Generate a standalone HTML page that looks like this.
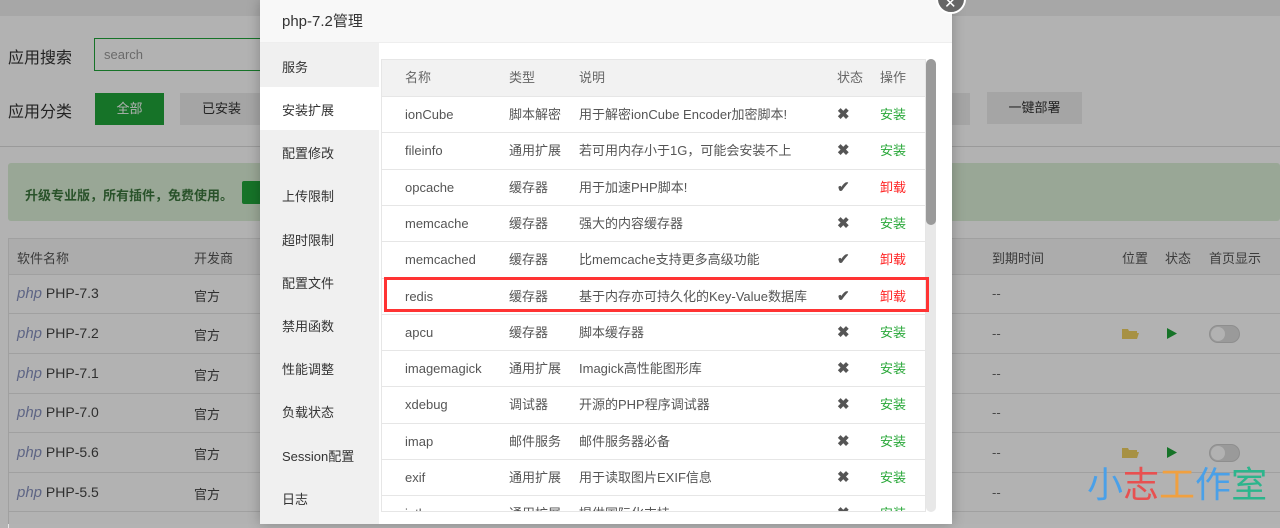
<!DOCTYPE html>
<html style="background:#b3b3b3"><head><meta charset="utf-8"><style>
*{margin:0;padding:0;box-sizing:border-box}
body{width:1280px;height:524px;overflow:hidden;background:#b3b3b3;font-family:"Liberation Sans","Noto Sans CJK SC",sans-serif;position:relative;color:#333}
.a{position:absolute;white-space:nowrap}
.t13{font-size:13px}
#shade{position:absolute;left:0;top:0;width:1280px;height:524px;background:rgba(0,0,0,0.3);z-index:5}
#modal{position:absolute;left:0;top:0;width:1280px;height:524px;z-index:10}
</style></head><body>
<div class="a" style="left:0;top:0;width:1280px;height:524px;background:#fff"></div>
<div class="a" style="left:0;top:0;width:1280px;height:16px;background:#f0f0f0"></div>
<div class="a" style="left:8px;top:44px;font-size:16px;color:#333">应用搜索</div>
<div class="a" style="left:94px;top:38px;width:180px;height:33px;border:1px solid #20a53a;background:#fff"></div>
<div class="a" style="left:104px;top:47px;font-size:13px;color:#999">search</div>
<div class="a" style="left:8px;top:98px;font-size:16px;color:#333">应用分类</div>
<div class="a" style="left:95px;top:93px;width:69px;height:32px;background:#20a53a;color:#fff;font-size:13px;text-align:center;line-height:32px">全部</div>
<div class="a" style="left:180px;top:93px;width:90px;height:32px;background:#ececec;color:#333;font-size:13px;line-height:32px;padding-left:22px">已安装</div>
<div class="a" style="left:950px;top:93px;width:20px;height:32px;background:#ececec"></div>
<div class="a" style="left:987px;top:92px;width:95px;height:32px;background:#ececec;color:#333;font-size:13px;line-height:32px;text-align:center">一键部署</div>
<div class="a" style="left:0;top:146px;width:1280px;height:1px;background:#ddd"></div>
<div class="a" style="left:8px;top:163px;width:1272px;height:58px;background:#dcf0d7;border-radius:3px"></div>
<div class="a" style="left:25px;top:185px;font-size:13px;color:#3c763d;font-weight:bold">升级专业版，所有插件，免费使用。</div>
<div class="a" style="left:242px;top:181px;width:30px;height:23px;background:#20a53a;border-radius:2px"></div>
<div class="a" style="left:8px;top:238px;width:1272px;height:37px;background:#f6f6f6;border-top:1px solid #e6e6e6;border-bottom:1px solid #e6e6e6"></div>
<div class="a t13" style="left:17px;top:248px;color:#555">软件名称</div>
<div class="a t13" style="left:194px;top:248px;color:#555">开发商</div>
<div class="a t13" style="left:992px;top:248px;color:#555">到期时间</div>
<div class="a t13" style="left:1122px;top:248px;color:#555">位置</div>
<div class="a t13" style="left:1165px;top:248px;color:#555">状态</div>
<div class="a t13" style="left:1209px;top:248px;color:#555">首页显示</div>
<div class="a" style="left:8px;top:238px;width:1px;height:290px;background:#e6e6e6"></div>
<div class="a" style="left:8px;top:313px;width:1272px;height:1px;background:#e6e6e6"></div>
<div class="a" style="left:8px;top:353px;width:1272px;height:1px;background:#e6e6e6"></div>
<div class="a" style="left:8px;top:393px;width:1272px;height:1px;background:#e6e6e6"></div>
<div class="a" style="left:8px;top:432px;width:1272px;height:1px;background:#e6e6e6"></div>
<div class="a" style="left:8px;top:472px;width:1272px;height:1px;background:#e6e6e6"></div>
<div class="a" style="left:8px;top:511px;width:1272px;height:1px;background:#e6e6e6"></div>
<div class="a" style="left:17px;top:285px;color:#444;font-size:14px"><i style="color:#8892bf;font-size:15px">php</i> PHP-7.3</div>
<div class="a" style="left:17px;top:325px;color:#444;font-size:14px"><i style="color:#8892bf;font-size:15px">php</i> PHP-7.2</div>
<div class="a" style="left:17px;top:365px;color:#444;font-size:14px"><i style="color:#8892bf;font-size:15px">php</i> PHP-7.1</div>
<div class="a" style="left:17px;top:404px;color:#444;font-size:14px"><i style="color:#8892bf;font-size:15px">php</i> PHP-7.0</div>
<div class="a" style="left:17px;top:444px;color:#444;font-size:14px"><i style="color:#8892bf;font-size:15px">php</i> PHP-5.6</div>
<div class="a" style="left:17px;top:484px;color:#444;font-size:14px"><i style="color:#8892bf;font-size:15px">php</i> PHP-5.5</div>
<div class="a t13" style="left:194px;top:286px;color:#444">官方</div>
<div class="a t13" style="left:194px;top:325px;color:#444">官方</div>
<div class="a t13" style="left:194px;top:365px;color:#444">官方</div>
<div class="a t13" style="left:194px;top:404px;color:#444">官方</div>
<div class="a t13" style="left:194px;top:444px;color:#444">官方</div>
<div class="a t13" style="left:194px;top:484px;color:#444">官方</div>
<div class="a t13" style="left:992px;top:286px;color:#666">--</div>
<div class="a t13" style="left:992px;top:326px;color:#666">--</div>
<div class="a t13" style="left:992px;top:366px;color:#666">--</div>
<div class="a t13" style="left:992px;top:405px;color:#666">--</div>
<div class="a t13" style="left:992px;top:445px;color:#666">--</div>
<div class="a t13" style="left:992px;top:485px;color:#666">--</div>
<svg class="a" style="left:1122px;top:327px" width="17" height="12"><path d="M0 2h6l1 2h8v2H3L0 12zM3 6h14l-2 6H0z" fill="#f0d060"/></svg>
<svg class="a" style="left:1122px;top:446px" width="17" height="12"><path d="M0 2h6l1 2h8v2H3L0 12zM3 6h14l-2 6H0z" fill="#f0d060"/></svg>
<svg class="a" style="left:1167px;top:328px" width="10" height="11"><path d="M0 0L10 5.5 0 11z" fill="#20a53a"/></svg>
<svg class="a" style="left:1167px;top:447px" width="10" height="11"><path d="M0 0L10 5.5 0 11z" fill="#20a53a"/></svg>
<div class="a" style="left:1209px;top:325px;width:31px;height:18px;border-radius:9px;background:#ddd;border:1px solid #ccc"><div style="position:absolute;left:1px;top:1px;width:14px;height:14px;border-radius:50%;background:#fff"></div></div>
<div class="a" style="left:1209px;top:444px;width:31px;height:18px;border-radius:9px;background:#ddd;border:1px solid #ccc"><div style="position:absolute;left:1px;top:1px;width:14px;height:14px;border-radius:50%;background:#fff"></div></div>

<div id="shade"></div>

<div id="modal">
<div class="a" style="left:260px;top:0;width:692px;height:524px;background:#fff;box-shadow:0 0 12px rgba(0,0,0,.25)"></div>
<div class="a" style="left:260px;top:0;width:692px;height:43px;background:#f8f8f8;border-bottom:1px solid #eee"></div>
<div class="a" style="left:282px;top:10px;font-size:15px;color:#333">php-7.2管理</div>
<div class="a" style="left:260px;top:43px;width:119px;height:481px;background:#f0f0f0"></div>
<div class="a" style="left:260px;top:87px;width:119px;height:43px;background:#fff"></div>
<div class="a t13" style="left:282px;top:57px">服务</div>
<div class="a t13" style="left:282px;top:100px">安装扩展</div>
<div class="a t13" style="left:282px;top:143px">配置修改</div>
<div class="a t13" style="left:282px;top:186px">上传限制</div>
<div class="a t13" style="left:282px;top:230px">超时限制</div>
<div class="a t13" style="left:282px;top:273px">配置文件</div>
<div class="a t13" style="left:282px;top:316px">禁用函数</div>
<div class="a t13" style="left:282px;top:359px">性能调整</div>
<div class="a t13" style="left:282px;top:402px">负载状态</div>
<div class="a t13" style="left:282px;top:446px">Session配置</div>
<div class="a t13" style="left:282px;top:489px">日志</div>
<div class="a" style="left:936px;top:-16px;width:30px;height:30px;border-radius:50%;background:#666;border:2px solid #fff"></div>
<div class="a" style="left:944px;top:-6px;color:#fff;font-size:15px">✕</div>
<div class="a" style="left:381px;top:59px;width:545px;height:453px;overflow:hidden;border:1px solid #e6e6e6">
<div style="position:absolute;left:0;top:0;width:545px;height:36px;background:#f2f2f2;font-size:13px;color:#666;line-height:36px">
<span style="position:absolute;left:23px">名称</span><span style="position:absolute;left:127px">类型</span><span style="position:absolute;left:197px">说明</span><span style="position:absolute;left:455px">状态</span><span style="position:absolute;left:498px">操作</span></div>
<div id="rows"></div>
</div>
<div class="a" style="left:926px;top:59px;width:10px;height:453px;background:#e8e8e8;border-radius:5px"></div>
<div class="a" style="left:926px;top:59px;width:10px;height:166px;background:#9a9a9a;border-radius:5px"></div>
<div class="a" style="left:384px;top:277px;width:545px;height:35px;border:3px solid #f33"></div>
<div class="a" style="left:1087px;top:462px;font-size:36px;line-height:40px;font-family:'Noto Sans CJK SC',sans-serif"><span style="color:#4aa0e8">小</span><span style="color:#e85050">志</span><span style="color:#f0a040">工</span><span style="color:#4aa0e8">作</span><span style="color:#2cb58c">室</span></div>
</div>

<script>
var d=[["ionCube","脚本解密","用于解密ionCube Encoder加密脚本!",0],["fileinfo","通用扩展","若可用内存小于1G，可能会安装不上",0],["opcache","缓存器","用于加速PHP脚本!",1],["memcache","缓存器","强大的内容缓存器",0],["memcached","缓存器","比memcache支持更多高级功能",1],["redis","缓存器","基于内存亦可持久化的Key-Value数据库",1],["apcu","缓存器","脚本缓存器",0],["imagemagick","通用扩展","Imagick高性能图形库",0],["xdebug","调试器","开源的PHP程序调试器",0],["imap","邮件服务","邮件服务器必备",0],["exif","通用扩展","用于读取图片EXIF信息",0],["intl","通用扩展","提供国际化支持",0]];
var h='';d.forEach(function(r,i){h+='<div style="position:absolute;left:0;top:'+(36+i*36.3)+'px;width:545px;height:36.3px;border-top:1px solid #e6e6e6;font-size:13px;color:#555;line-height:35px">'+
'<span style="position:absolute;left:23px">'+r[0]+'</span><span style="position:absolute;left:127px">'+r[1]+'</span><span style="position:absolute;left:197px">'+r[2]+'</span>'+
'<span style="position:absolute;left:455px;color:#555;font-size:15px;font-weight:bold">'+(r[3]?'✔':'✖')+'</span>'+
'<span style="position:absolute;left:498px;color:'+(r[3]?'#f22':'#2aa83a')+'">'+(r[3]?'卸载':'安装')+'</span></div>'});
document.getElementById('rows').innerHTML=h;
</script>
</body></html>
